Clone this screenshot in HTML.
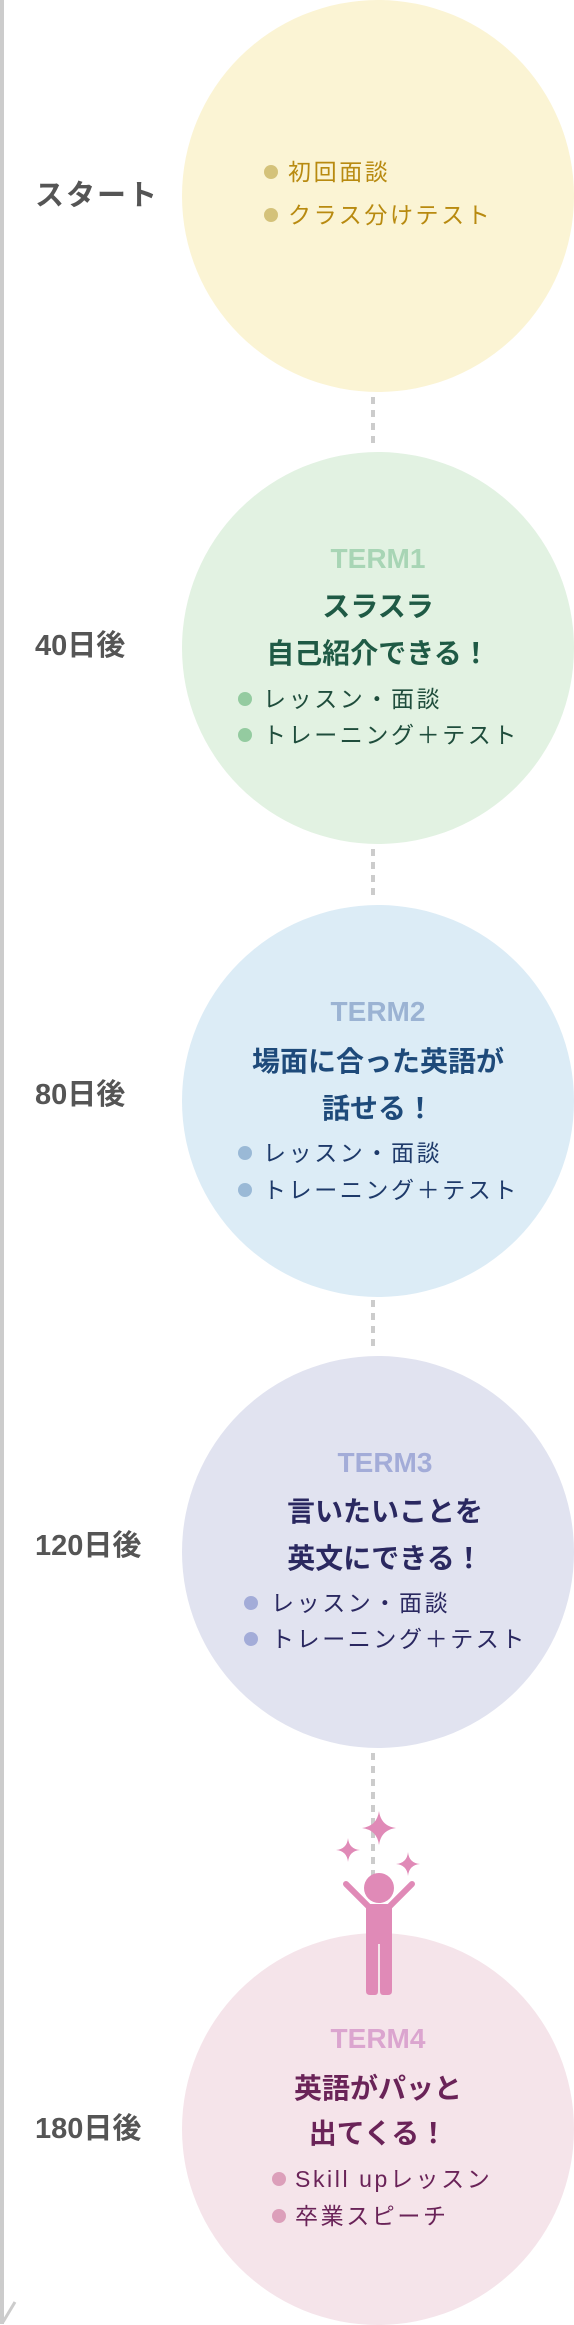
<!DOCTYPE html>
<html><head><meta charset="utf-8"><style>
*{margin:0;padding:0;box-sizing:border-box}
body{width:574px;height:2324px;position:relative;background:#fff;overflow:hidden;font-family:"Liberation Sans","Noto Sans CJK JP",sans-serif}
.c{position:absolute;left:182px;width:392px;height:392px;border-radius:50%}
.lab{position:absolute;left:35px;font-size:29px;font-weight:bold;color:#555;line-height:40px;white-space:nowrap}
.t{position:absolute;left:182px;width:392px;text-align:center;white-space:nowrap}
.term{font-size:28px;font-weight:bold;line-height:36px}
.ti{font-size:28px;font-weight:bold;line-height:40px;font-family:"Noto Sans CJK JP",sans-serif}
.b{position:absolute;font-size:23px;letter-spacing:2.6px;line-height:32px;white-space:nowrap;font-family:"Liberation Sans","Noto Sans CJK JP",sans-serif}
.b i{position:absolute;width:14px;height:14px;border-radius:50%;top:9px}
.dash{position:absolute;left:371px;width:4px;background:repeating-linear-gradient(#ccc 0 7px,transparent 7px 13px)}
</style></head><body>
<div style="position:absolute;left:0;top:0;width:4px;height:2324px;background:#ccc"></div>
<svg style="position:absolute;left:0;top:2296px" width="20" height="28"><line x1="3" y1="26" x2="15" y2="6" stroke="#ccc" stroke-width="3"/></svg>

<div class="dash" style="top:397px;height:52px"></div>
<div class="dash" style="top:849px;height:52px"></div>
<div class="dash" style="top:1300px;height:52px"></div>
<div class="dash" style="top:1753px;height:124px"></div>

<div class="c" style="top:0;background:#fbf4d4"></div>
<div class="lab" style="top:176px;letter-spacing:2px">スタート</div>
<div class="b" style="left:264px;top:156px;color:#b88a10"><i style="left:0;background:#d4c27a"></i><span style="margin-left:24px">初回面談</span></div>
<div class="b" style="left:264px;top:199px;color:#b88a10"><i style="left:0;background:#d4c27a"></i><span style="margin-left:24px">クラス分けテスト</span></div>

<div class="c" style="top:452px;background:#e2f2e2"></div>
<div class="lab" style="top:626px">40日後</div>
<div class="t term" style="top:541px;color:#a8d5b5">TERM1</div>
<div class="t ti" style="top:585px;color:#1f5a45">スラスラ</div>
<div class="t ti" style="top:632px;color:#1f5a45">自己紹介できる！</div>
<div class="b" style="left:238px;top:683px;color:#1f4d3c"><i style="left:0;background:#94cba0"></i><span style="margin-left:25px">レッスン・面談</span></div>
<div class="b" style="left:238px;top:719px;color:#1f4d3c"><i style="left:0;background:#94cba0"></i><span style="margin-left:25px">トレーニング＋テスト</span></div>

<div class="c" style="top:905px;background:#dcecf6"></div>
<div class="lab" style="top:1075px">80日後</div>
<div class="t term" style="top:994px;color:#9bb3d3">TERM2</div>
<div class="t ti" style="top:1040px;color:#1e4a7a">場面に合った英語が</div>
<div class="t ti" style="top:1087px;color:#1e4a7a">話せる！</div>
<div class="b" style="left:238px;top:1137px;color:#1e3a6a"><i style="left:0;background:#9ab9d6"></i><span style="margin-left:25px">レッスン・面談</span></div>
<div class="b" style="left:238px;top:1174px;color:#1e3a6a"><i style="left:0;background:#9ab9d6"></i><span style="margin-left:25px">トレーニング＋テスト</span></div>

<div class="c" style="top:1356px;background:#e1e3f0"></div>
<div class="lab" style="top:1526px">120日後</div>
<div class="t term" style="top:1445px;color:#a3acd8;padding-left:14px">TERM3</div>
<div class="t ti" style="top:1490px;color:#2a2860;padding-left:14px">言いたいことを</div>
<div class="t ti" style="top:1537px;color:#2a2860;padding-left:14px">英文にできる！</div>
<div class="b" style="left:244px;top:1587px;color:#2a2860"><i style="left:0;background:#a3acd8"></i><span style="margin-left:27px">レッスン・面談</span></div>
<div class="b" style="left:244px;top:1623px;color:#2a2860"><i style="left:0;background:#a3acd8"></i><span style="margin-left:27px">トレーニング＋テスト</span></div>

<div class="c" style="top:1933px;background:#f5e4ea"></div>
<div class="lab" style="top:2109px">180日後</div>
<div class="t term" style="top:2021px;color:#dba5cf">TERM4</div>
<div class="t ti" style="top:2067px;color:#6a2358">英語がパッと</div>
<div class="t ti" style="top:2112px;color:#6a2358">出てくる！</div>
<div class="b" style="left:272px;top:2163px;color:#6a2358"><i style="left:0;background:#dc9fba"></i><span style="margin-left:23px">Skill upレッスン</span></div>
<div class="b" style="left:272px;top:2200px;color:#6a2358"><i style="left:0;background:#dc9fba"></i><span style="margin-left:23px">卒業スピーチ</span></div>

<svg style="position:absolute;left:330px;top:1800px" width="100" height="200" viewBox="0 0 100 200">
<g fill="#e08ab7">
<path d="M49 11 Q51 26 66 28 Q51 30 49 45 Q47 30 32 28 Q47 26 49 11Z"/>
<path d="M18 38 Q19 49 30 50 Q19 51 18 62 Q17 51 6 50 Q17 49 18 38Z"/>
<path d="M78 52 Q79 63 90 64 Q79 65 78 76 Q77 65 66 64 Q77 63 78 52Z"/>
<circle cx="49" cy="88" r="15"/>
<path d="M36 104 H62 V191 Q62 195 58 195 H53 Q50 195 50 191 V144 H48 V191 Q48 195 45 195 H40 Q36 195 36 191Z"/>
</g>
<g stroke="#e08ab7" stroke-width="6" stroke-linecap="round">
<line x1="40" y1="108" x2="16" y2="84"/>
<line x1="58" y1="108" x2="82" y2="84"/>
</g>
</svg>
</body></html>
